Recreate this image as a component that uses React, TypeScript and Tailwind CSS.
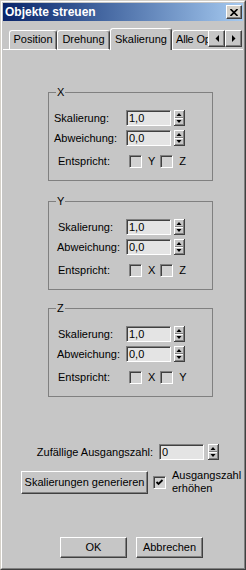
import React from "react";

const raised =
  "border border-t-white border-l-white border-r-[#404040] border-b-[#404040] shadow-[inset_-1px_-1px_0_#808080]";
const sunken =
  "border border-t-[#808080] border-l-[#808080] border-r-white border-b-white shadow-[inset_1px_1px_0_#404040]";

function Spinner() {
  return (
    <svg width="11" height="16" viewBox="0 0 11 16" className="shrink-0">
      <rect x="0" y="0" width="11" height="16" fill="#c6c6c6" />
      <rect x="0" y="0" width="10" height="1" fill="#ffffff" />
      <rect x="0" y="0" width="1" height="15" fill="#ffffff" />
      <rect x="10" y="0" width="1" height="16" fill="#404040" />
      <rect x="0" y="15" width="11" height="1" fill="#404040" />
      <rect x="9" y="1" width="1" height="14" fill="#808080" />
      <rect x="1" y="14" width="9" height="1" fill="#808080" />
      <rect x="1" y="7" width="8" height="1" fill="#808080" />
      <rect x="1" y="8" width="8" height="1" fill="#ffffff" />
      <polygon points="2.5,6 7.5,6 5,3" fill="#000" />
      <polygon points="2.5,10 7.5,10 5,13" fill="#000" />
    </svg>
  );
}

function NumField({ value }: { value: string }) {
  return (
    <div className={`${sunken} h-[16px] w-[45px] shrink-0 bg-[#e4e4e4] pl-[2px] leading-[14px]`}>
      {value}
    </div>
  );
}

function Check({ checked = false }: { checked?: boolean }) {
  return (
    <div className={`${sunken} flex h-[13px] w-[13px] shrink-0 items-center justify-center bg-[#d2d2d2]`}>
      {checked && (
        <svg width="9" height="9" viewBox="0 0 9 9">
          <polyline points="1.5,4 3.5,6 7.5,2" fill="none" stroke="#000" strokeWidth="1.8" />
        </svg>
      )}
    </div>
  );
}

function Row({ label, value, pad }: { label: string; value: string; pad: string }) {
  return (
    <div className="flex h-[16px] items-center">
      <span className={`w-[77px] shrink-0 ${pad}`}>{label}</span>
      <NumField value={value} />
      <div className="ml-[3px]">
        <Spinner />
      </div>
    </div>
  );
}

function Group({
  title,
  a,
  b,
  pads,
  className,
}: {
  title: string;
  a: string;
  b: string;
  pads: [string, string, string];
  className: string;
}) {
  return (
    <fieldset className={`ml-[45px] w-[165px] border border-[#808080] px-0 pt-[11px] pb-[12px] ${className}`}>
      <legend className="ml-[7px] px-[1px] leading-[13px]">{title}</legend>
      <Row label="Skalierung:" value="1,0" pad={pads[0]} />
      <div className="mt-[4px]">
        <Row label="Abweichung:" value="0,0" pad={pads[1]} />
      </div>
      <div className="mt-[9px] flex h-[13px] items-center">
        <span className={`w-[80px] shrink-0 ${pads[2]}`}>Entspricht:</span>
        <Check />
        <span className="ml-[6px]">{a}</span>
        <div className="ml-[5px]">
          <Check />
        </div>
        <span className="ml-[6px]">{b}</span>
      </div>
    </fieldset>
  );
}

function ArrowButton({ dir }: { dir: "left" | "right" }) {
  return (
    <div className={`${raised} flex h-[17px] w-[17px] items-center justify-center bg-[#c6c6c6]`}>
      <svg width="4" height="7" viewBox="0 0 4 7">
        {dir === "left" ? (
          <polygon points="4,0 4,7 0.5,3.5" fill="#000" />
        ) : (
          <polygon points="0,0 0,7 3.5,3.5" fill="#000" />
        )}
      </svg>
    </div>
  );
}

const tabBase =
  "shrink-0 border-t border-l border-r border-t-white border-l-white border-r-[#404040] shadow-[inset_-1px_0_0_#808080] rounded-t-[3px] bg-[#c6c6c6]";

export default function App() {
  return (
    <div className="h-[570px] w-[246px] border border-t-[#d4d0c8] border-l-[#d4d0c8] border-r-[#404040] border-b-[#404040] bg-[#c6c6c6] font-['Liberation_Sans',Arial,sans-serif] text-[11px] text-black">
      <div className="flex h-full flex-col border border-t-white border-l-white border-r-[#808080] border-b-[#808080] p-[1px]">
        {/* title bar */}
        <div className="flex h-[18px] shrink-0 items-center justify-between bg-linear-to-r from-[#0a246a] to-[#a6caf0] pl-[2px] pr-[1px]">
          <span className="text-[12px] leading-[18px] font-bold text-white">Objekte streuen</span>
          <div className={`${raised} flex h-[14px] w-[16px] items-center justify-center bg-[#d4d0c8]`}>
            <svg width="8" height="7" viewBox="0 0 8 7">
              <path d="M0.5 0 L7.5 7 M7.5 0 L0.5 7" stroke="#000" strokeWidth="1.6" />
            </svg>
          </div>
        </div>

        {/* tabs */}
        <div className="mt-[7px] flex h-[22px] shrink-0">
          <div className="w-[6px] shrink-0 border-b border-white" />
          <div className="flex w-[199px] shrink-0 items-end overflow-hidden">
            <div className={`${tabBase} h-[20px] w-[48px] border-b border-b-white text-center leading-[17px]`}>Position</div>
            <div className={`${tabBase} h-[20px] w-[53px] border-b border-b-white text-center leading-[17px]`}>Drehung</div>
            <div className={`${tabBase} h-[22px] w-[62px] pt-[1px] text-center leading-[18px]`}>Skalierung</div>
            <div className={`${tabBase} h-[20px] w-[78px] border-b border-b-white pl-[3px] leading-[17px] tracking-[-0.2px]`}>Alle Op</div>
          </div>
          <div className="flex flex-1 items-start border-b border-white pt-[2px]">
            <ArrowButton dir="left" />
            <ArrowButton dir="right" />
          </div>
        </div>

        {/* groups */}
        <Group title="X" a="Y" b="Z" pads={["pl-[5px]", "pl-[5px]", "pl-[9px]"]} className="mt-[36px]" />
        <Group title="Y" a="X" b="Z" pads={["pl-[9px]", "pl-[8px]", "pl-[9px]"]} className="mt-[14px]" />
        <Group title="Z" a="X" b="Y" pads={["pl-[9px]", "pl-[8px]", "pl-[9px]"]} className="mt-[12px]" />

        {/* seed */}
        <div className="mt-[47px] flex h-[16px] items-center">
          <span className="w-[156px] shrink-0 pr-[6px] text-right">Zufällige Ausgangszahl:</span>
          <NumField value="0" />
          <div className="ml-[4px]">
            <Spinner />
          </div>
        </div>

        <div className="mt-[9px] flex items-center pl-[18px]">
          <div className={`${raised} flex h-[23px] w-[127px] items-center justify-center`}>
            Skalierungen generieren
          </div>
          <div className="ml-[5px]">
            <Check checked />
          </div>
          <div className="ml-[6px] leading-[13px]">
            Ausgangszahl
            <br />
            erhöhen
          </div>
        </div>

        {/* dialog buttons */}
        <div className="mt-[42px] flex gap-[9px] pl-[57px]">
          <div className={`${raised} flex h-[21px] w-[67px] items-center justify-center`}>OK</div>
          <div className={`${raised} flex h-[21px] w-[67px] items-center justify-center`}>Abbrechen</div>
        </div>
      </div>
    </div>
  );
}
